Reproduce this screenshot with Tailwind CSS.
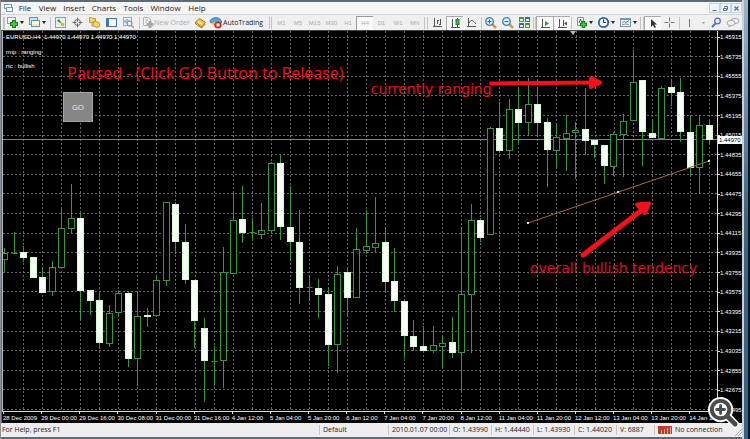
<!DOCTYPE html>
<html lang="en">
<head>
  <meta charset="UTF-8" />
  <meta name="viewport" content="width=device-width, initial-scale=1.0" />
  <title>EURUSD,H4</title>
  <script src="https://cdn.jsdelivr.net/npm/@tailwindcss/browser@4"></script>
</head>
<body class="h-screen overflow-hidden flex bg-[#5d6b75] font-['Open_Sans',sans-serif] text-[8px] leading-[10px] text-[#222]">
  <div class="flex-1 min-w-0 flex flex-col border-l border-[#8b9096] pt-[2px] pb-[2px]">

    <!-- Menu bar -->
    <div class="h-[12px] shrink-0 flex items-center bg-[#f5f5f6] pl-[2px]">
      <svg class="w-[11px] h-[11px] mr-[1px]" viewBox="0 0 11 11" fill="#fff" stroke="#6f9cc8"><rect x="1.5" y="1.5" width="7" height="4" /><rect x="3.5" y="4.5" width="6" height="4" /></svg>
      <nav class="flex flex-1">
        <button class="w-[20px]">File</button>
        <button class="w-[25px]">View</button>
        <button class="w-[28px]">Insert</button>
        <button class="w-[32px]">Charts</button>
        <button class="w-[27px]">Tools</button>
        <button class="w-[37px]">Window</button>
        <button class="w-[26px]">Help</button>
      </nav>
      <div class="flex text-[#5f7183]">
        <button aria-label="Minimize" class="w-[11px] h-[10px] border border-[#c3d3e6] bg-[#eef4fb] flex items-center justify-center"><svg class="w-[7px] h-[7px]" viewBox="0 0 7 7" stroke="currentColor"><path d="M1.5 5.5h4" /></svg></button>
        <button aria-label="Restore" class="w-[11px] h-[10px] border border-[#c3d3e6] bg-[#eef4fb] flex items-center justify-center"><svg class="w-[7px] h-[7px]" viewBox="0 0 7 7" fill="none" stroke="currentColor"><path d="M2.5 2.5v-1h3v3h-1M1.500 3.500h3v2h-3z" /></svg></button>
        <button aria-label="Close" class="w-[11px] h-[10px] border border-[#c3d3e6] bg-[#eef4fb] flex items-center justify-center"><svg class="w-[7px] h-[7px]" viewBox="0 0 7 7" stroke="currentColor" stroke-width="1.3"><path d="M1.500 1.500l4 4M5.500 1.500l-4 4" /></svg></button>
      </div>
    </div>

    <!-- Toolbar -->
    <div class="h-[16px] shrink-0 flex items-center overflow-hidden bg-[#f1f0f1] border-t border-[#d4d4d6] pl-[1px]">
      <i class="w-[4px] flex justify-center shrink-0"><b class="w-[2px] h-[12px] border-x border-[#c4c4c4]"></b></i>
      <button aria-label="New chart" class="w-[20px] shrink-0 flex items-center">
        <svg class="w-[13px] h-[13px]" viewBox="0 0 13 13"><rect x="1.500" y="1.500" width="8" height="6" fill="#fff" stroke="#8fa0a8" /><path d="M8 4v8M4 8h8" stroke="#12801c" stroke-width="4" /><path d="M8 5v6M5 8h6" stroke="#3ccc48" stroke-width="2" /></svg>
        <svg class="w-[5px] h-[3px]" viewBox="0 0 5 3"><path d="M1 0h4L3 3z" fill="#222" /></svg>
      </button>
      <button aria-label="Profiles" class="w-[22px] shrink-0 flex items-center pl-[2px]">
        <svg class="w-[13px] h-[13px]" viewBox="0 0 13 13" stroke="#5c93c6"><rect x="1.500" y="1.500" width="8" height="7" fill="#cfe3f5" /><rect x="3.500" y="4.500" width="8" height="6" fill="#fff" /><path d="M4 9h7" stroke="#f0e8c8" stroke-width="2" /></svg>
        <svg class="w-[5px] h-[3px]" viewBox="0 0 5 3"><path d="M1 0h4L3 3z" fill="#222" /></svg>
      </button>
      <i class="w-[4px] flex justify-center shrink-0"><b class="w-px h-[12px] bg-[#c4c4c4]"></b></i>
      <button aria-label="Market watch" class="w-[17px] shrink-0 flex justify-center">
        <svg class="w-[13px] h-[13px]" viewBox="0 0 13 13"><rect x="1.500" y="1.500" width="10" height="10" fill="#e8f4ea" stroke="#7fa2c4" /><path d="M3 5l2-2 2 3z" fill="#2f9a3a" /><path d="M4 5l6 4" stroke="#3b8850" /><circle cx="8.500" cy="8.500" r="1.800" fill="#e0b53a" /></svg>
      </button>
      <button aria-label="Data window" class="w-[17px] shrink-0 flex justify-center">
        <svg class="w-[13px] h-[13px]" viewBox="0 0 13 13" fill="none" stroke="#666"><circle cx="6.500" cy="6.500" r="3" /><path d="M6.500 1.500v4M6.500 7.500v4M1.500 6.500h4M7.500 6.500h4" /></svg>
      </button>
      <button aria-label="Navigator" class="w-[17px] shrink-0 flex justify-center">
        <svg class="w-[13px] h-[13px]" viewBox="0 0 13 13" fill="#f6d868" stroke="#c79a2a"><path d="M1.500 1.500h2l1 1h3v4h-6z" /><path d="M4 7v3h2" fill="none" stroke="#999" /><path d="M6 5l5 1.500 1 3.500-3 1.500-4-2z" /></svg>
      </button>
      <button aria-label="Terminal" class="w-[17px] shrink-0 flex justify-center">
        <svg class="w-[13px] h-[13px]" viewBox="0 0 13 13"><rect x="1.500" y="2.500" width="10" height="8" fill="#fff" stroke="#3f78b8" /><path d="M3 3v7" stroke="#3f78b8" stroke-width="2" /><path d="M5 4h6" stroke="#c3d8ee" /></svg>
      </button>
      <button aria-label="Strategy tester" class="w-[17px] shrink-0 flex justify-center">
        <svg class="w-[13px] h-[13px]" viewBox="0 0 13 13" fill="none"><rect x="1.500" y="1.500" width="8" height="8" fill="#eef2f6" stroke="#9aacbc" /><path d="M3 7V4M5 8V3M7 6V4" stroke="#6f90ac" /><circle cx="7.500" cy="7.500" r="2.500" stroke="#6f8fb0" /><path d="M9.500 9.500l2.500 2.500" stroke="#c79b3c" stroke-width="1.500" /></svg>
      </button>
      <i class="w-[4px] flex justify-center shrink-0"><b class="w-px h-[12px] bg-[#c4c4c4]"></b></i>
      <button class="w-[51px] shrink-0 flex items-center text-[#a9a9a9] whitespace-nowrap">
        <svg class="w-[13px] h-[13px] shrink-0" viewBox="0 0 13 13"><path d="M2.500 1.500h5l2 2v6h-7z" fill="#f4f4f4" stroke="#b4b4b4" /><path d="M4 4h3M4 6h2" stroke="#bbb" /><path d="M9 5v7M5.500 8.500h7" stroke="#a8a8a8" stroke-width="3" /></svg>
        <span class="text-[7px]">New Order</span>
      </button>
      <button aria-label="MetaEditor" class="w-[17px] shrink-0 flex justify-center">
        <svg class="w-[13px] h-[13px]" viewBox="0 0 13 13"><path d="M1.500 6l4-3.500 6 4-4 4.500z" fill="#f2be3e" stroke="#b17a18" /><path d="M1.500 6v2l6 4v-1.500M7.500 12l4-4" fill="none" stroke="#b17a18" /><path d="M4 5.500l4 2.500" stroke="#fff0b8" stroke-width="1.500" /></svg>
      </button>
      <button class="w-[58px] shrink-0 flex items-center whitespace-nowrap">
        <svg class="w-[14px] h-[13px] shrink-0" viewBox="0 0 14 13"><path d="M1 6c0-5 10-6 11-1l1 1-5 3z" fill="#5ca4da" stroke="#3b78ac" /><path d="M2 7l4-1 5 2-4 4z" fill="#edc04a" /><circle cx="9" cy="9" r="3.600" fill="#d8281e" /><rect x="7.500" y="7.500" width="3" height="3" fill="#fff" /></svg>
        <span class="text-[7px]">AutoTrading</span>
      </button>
      <i class="w-[6px] flex justify-center shrink-0"><b class="w-[3px] h-[12px] border-x border-[#c4c4c4]"></b></i>
      <div class="w-[150px] shrink-0 grid grid-cols-9 items-center text-[6px] text-[#aaa] font-['Liberation_Sans',sans-serif]">
        <button>M1</button><button>M5</button><button>M15</button><button>M30</button><button>H1</button>
        <button class="h-[14px] border-l border-t border-[#999] bg-[#fafafa]">H4</button>
        <button>D1</button><button>W1</button><button>MN</button>
      </div>
      <i class="w-[6px] flex justify-center shrink-0"><b class="w-[4px] h-[12px] border-x border-[#c4c4c4]"></b></i>
      <button aria-label="Bar chart" class="w-[17px] shrink-0 flex justify-center">
        <svg class="w-[13px] h-[13px]" viewBox="0 0 13 13" fill="none" stroke="#555"><path d="M3.500 2v8.500M2 10.500h9M6.500 4v4M6 4.500h2M9.500 3v6M8 8.500h2" /></svg>
      </button>
      <button aria-label="Candlesticks" class="w-[17px] h-[14px] shrink-0 flex justify-center border-l border-t border-[#aaa] bg-[#fafafa]">
        <svg class="w-[13px] h-[13px]" viewBox="0 0 13 13" fill="none"><path d="M3.500 2v8.500M2 10.500h9" stroke="#555" /><path d="M8.500 1v9" stroke="#14851f" /><rect x="7" y="2.500" width="3" height="5" fill="#35c043" stroke="#14851f" /></svg>
      </button>
      <button aria-label="Line chart" class="w-[17px] shrink-0 flex justify-center">
        <svg class="w-[13px] h-[13px]" viewBox="0 0 13 13" fill="none" stroke="#555"><path d="M3.500 2v8.500M2 10.500h9M4 7c2-4 4-3 7 1" /></svg>
      </button>
      <i class="w-[2px] flex justify-center shrink-0"><b class="w-px h-[12px] bg-[#c4c4c4]"></b></i>
      <button aria-label="Zoom in" class="w-[17px] shrink-0 flex justify-center">
        <svg class="w-[13px] h-[13px]" viewBox="0 0 13 13"><path d="M8 8l4 4" stroke="#cf9f3a" stroke-width="2.500" /><circle cx="5.500" cy="5.500" r="3.800" fill="#dcedfb" stroke="#3d7ec2" stroke-width="1.300" /><path d="M3.500 5.500h4M5.500 3.500v4" stroke="#2e68a8" /></svg>
      </button>
      <button aria-label="Zoom out" class="w-[17px] shrink-0 flex justify-center">
        <svg class="w-[13px] h-[13px]" viewBox="0 0 13 13"><path d="M8 8l4 4" stroke="#cf9f3a" stroke-width="2.500" /><circle cx="5.500" cy="5.500" r="3.800" fill="#dcedfb" stroke="#3d7ec2" stroke-width="1.300" /><path d="M3.500 5.500h4" stroke="#2e68a8" /></svg>
      </button>
      <button aria-label="Tile windows" class="w-[17px] shrink-0 flex justify-center">
        <svg class="w-[13px] h-[13px]" viewBox="0 0 13 13"><path d="M1 1h5v5H1zM7 7h5v5H7z" fill="#3f9a48" /><path d="M7 1h5v5H7zM1 7h5v5H1z" fill="#2f6cb4" /><path d="M2 4h3M8 4h3M2 10h3M8 10h3" stroke="#e9f3c8" stroke-width="2" /></svg>
      </button>
      <i class="w-[3px] flex justify-center shrink-0"><b class="w-[3px] h-[12px] border-x border-[#c4c4c4]"></b></i>
      <button aria-label="Auto scroll" class="w-[17px] h-[14px] shrink-0 flex justify-center border-l border-t border-[#aaa] bg-[#fafafa]">
        <svg class="w-[13px] h-[13px]" viewBox="0 0 13 13" fill="none"><path d="M3.500 2v8.500M2 10.500h9" stroke="#555" /><path d="M6 4l4 2.500L6 9z" fill="#2c9c38" /></svg>
      </button>
      <button aria-label="Chart shift" class="w-[17px] h-[14px] shrink-0 flex justify-center border-l border-t border-[#aaa] bg-[#fafafa]">
        <svg class="w-[13px] h-[13px]" viewBox="0 0 13 13" fill="none"><path d="M3.500 2v8.500M2 10.500h9M7.500 3v6" stroke="#555" /><path d="M8 6.500l3-2v4z" fill="#555" /></svg>
      </button>
      <i class="w-[3px] flex justify-center shrink-0"><b class="w-px h-[12px] bg-[#c4c4c4]"></b></i>
      <button aria-label="Indicators" class="w-[22px] shrink-0 flex items-center pl-[2px]">
        <svg class="w-[13px] h-[13px]" viewBox="0 0 13 13"><path d="M2.500 1.500h6v8h-6z" fill="#fff" stroke="#7c9c80" /><path d="M4 7l1.500-4L7 7" fill="none" stroke="#555" /><path d="M8.500 5v7M5 8.500h7" stroke="#12801c" stroke-width="3.500" /><path d="M8.500 6v5M6 8.500h5" stroke="#3ccc48" stroke-width="1.500" /></svg>
        <svg class="w-[5px] h-[3px]" viewBox="0 0 5 3"><path d="M1 0h4L3 3z" fill="#222" /></svg>
      </button>
      <button aria-label="Periods" class="w-[22px] shrink-0 flex items-center pl-[2px]">
        <svg class="w-[13px] h-[13px]" viewBox="0 0 13 13"><circle cx="6.500" cy="6.500" r="4.700" fill="#f2f8fe" stroke="#2863ae" stroke-width="1.800" /><path d="M6.500 3.500v3h2.500" fill="none" stroke="#333" /></svg>
        <svg class="w-[5px] h-[3px]" viewBox="0 0 5 3"><path d="M1 0h4L3 3z" fill="#222" /></svg>
      </button>
      <button aria-label="Templates" class="w-[22px] shrink-0 flex items-center pl-[2px]">
        <svg class="w-[13px] h-[13px]" viewBox="0 0 13 13" fill="none"><rect x="1.500" y="2.500" width="10" height="8" fill="#eef4fa" stroke="#7794b4" /><path d="M2 3.500h9" stroke="#7794b4" /><path d="M3 7l2-1.500 2 1 3-2" stroke="#6a8aa8" /><path d="M3 9l3-1 4 .5" stroke="#9a9a8a" /></svg>
        <svg class="w-[5px] h-[3px]" viewBox="0 0 5 3"><path d="M1 0h4L3 3z" fill="#222" /></svg>
      </button>
      <i class="w-[5px] flex justify-center shrink-0"><b class="w-[4px] h-[12px] border-x border-[#c4c4c4]"></b></i>
      <button aria-label="Cursor" class="w-[17px] h-[14px] shrink-0 flex justify-center border-l border-t border-[#aaa] bg-[#fafafa]">
        <svg class="w-[13px] h-[13px]" viewBox="0 0 13 13"><path d="M4 2v8l2-2 1.500 3 1.500-.8L7.500 7.500H10z" fill="#333" /></svg>
      </button>
      <button aria-label="Crosshair" class="w-[17px] shrink-0 flex justify-center">
        <svg class="w-[13px] h-[13px]" viewBox="0 0 13 13" stroke="#777"><path d="M6.500 1.500v4M6.500 7.500v4M1.500 6.500h4M7.500 6.500h4" /></svg>
      </button>
      <i class="w-[3px] flex justify-center shrink-0"><b class="w-px h-[12px] bg-[#c4c4c4]"></b></i>
      <button aria-label="Vertical line" class="w-[17px] shrink-0 flex justify-center">
        <svg class="w-[13px] h-[13px]" viewBox="0 0 13 13" stroke="#777"><path d="M6.500 3v8" /></svg>
      </button>
      <button aria-label="More" class="w-[10px] shrink-0 flex justify-center">
        <svg class="w-[3px] h-[3px]" viewBox="0 0 3 3"><path d="M0 1h3L1.500 3z" fill="#999" /></svg>
      </button>
      <button aria-label="Search" class="w-[16px] shrink-0 flex justify-center ml-auto">
        <svg class="w-[13px] h-[13px]" viewBox="0 0 13 13" fill="none" stroke="#4b72b8"><path d="M5.500 7.500L2 11" stroke-width="2" /><circle cx="7.500" cy="5" r="2.800" stroke-width="1.300" /></svg>
      </button>
      <button aria-label="Chat" class="w-[18px] shrink-0 flex justify-center">
        <svg class="w-[14px] h-[13px]" viewBox="0 0 14 13" fill="#f2f2f2" stroke="#a8a8a8"><ellipse cx="9" cy="5" rx="4" ry="2.600" /><ellipse cx="5" cy="7" rx="4" ry="2.600" /><path d="M3 9v2l2-1.500" /></svg>
      </button>
    </div>

    <!-- Chart window -->
    <main class="flex-1 min-h-0 relative flex bg-black border-t border-[#3f464c] ml-[1px] text-white text-[6px] leading-[8px] font-['Liberation_Sans',sans-serif]">
      <div class="flex-1 min-w-0 flex flex-col">
        <div class="flex-1 min-h-0 relative border-l border-[#b5bac0]">
          <svg id="chart" class="absolute inset-0 w-full h-full" viewBox="3 31 714 380" preserveAspectRatio="none" fill="none"></svg>
          <p class="absolute left-[3px] top-[2px] whitespace-pre">EURUSD,H4  1.44970 1.44970 1.44970 1.44970</p>
          <p class="absolute left-[3px] top-[17px]">rmp : ranging</p>
          <p class="absolute left-[3px] top-[31px]">rtc : bullish</p>
          <h1 class="absolute left-[9%] top-[32px] text-[16px] leading-[20px] text-[#f0101c] font-['Open_Sans',sans-serif] whitespace-nowrap">Paused - (Click GO Button to Release)</h1>
          <button class="absolute left-[8.4%] top-[61px] w-[30px] h-[30px] bg-[#868686] border border-[#a5a5a5] text-[8px] text-[#eee] font-['Open_Sans',sans-serif]">GO</button>
          <p class="absolute left-[51.5%] top-[13%] text-[14px] leading-[18px] text-[#e8101c] font-['DejaVu_Sans',sans-serif] whitespace-nowrap">currently ranging</p>
          <p class="absolute left-[73.8%] top-[60%] text-[14px] leading-[18px] text-[#d8102a] font-['DejaVu_Sans',sans-serif] whitespace-nowrap">overall bullish tendency</p>
        </div>
        <div id="times" class="h-[12px] shrink-0 flex border-t border-[#d8d8d8] pl-[1px]"></div>
      </div>
      <div class="w-[25px] shrink-0 relative mb-[9px]">
        <div id="prices" class="h-full flex flex-col justify-between border-l border-[#d8d8d8] pt-[2px]"></div>
        <span class="absolute left-[1px] right-0 top-[27.5%] h-[8px] bg-white text-black pl-[1px]">1.44970</span>
      </div>
      <button aria-label="Enlarge" class="absolute right-[3px] -bottom-[5px] w-[32px] h-[32px]">
        <svg viewBox="0 0 33 33" fill="none" stroke-linecap="round"><path d="M22 22l7 7" stroke="#fff" stroke-width="8" /><circle cx="14" cy="14" r="10" fill="#fff" stroke="#fff" stroke-width="6" /><path d="M21 21l8 8" stroke="#4b4b4b" stroke-width="5" /><circle cx="14" cy="14" r="9" fill="#fff" stroke="#4b4b4b" stroke-width="4" /><path d="M14 10v8M10 14h8" stroke="#4b4b4b" stroke-width="3" /></svg>
      </button>
    </main>

    <!-- Status bar -->
    <footer class="h-[14px] shrink-0 flex items-center bg-[#efeeef] text-[7px] pl-[1px] whitespace-nowrap">
      <span class="flex-1">For Help, press F1</span>
      <span class="w-[69px] border-l border-[#c6c6c6] pl-[3px]">Default</span>
      <span class="w-[61px] border-l border-[#c6c6c6] pl-[3px]">2010.01.07 00:00</span>
      <span class="w-[42px] border-l border-[#c6c6c6] pl-[3px]">O: 1.43990</span>
      <span class="w-[42px] border-l border-[#c6c6c6] pl-[3px]">H: 1.44440</span>
      <span class="w-[41px] border-l border-[#c6c6c6] pl-[3px]">L: 1.43930</span>
      <span class="w-[42px] border-l border-[#c6c6c6] pl-[3px]">C: 1.44020</span>
      <span class="w-[38px] border-l border-[#c6c6c6] pl-[3px]">V: 6887</span>
      <span class="w-[81px] border-l border-[#c6c6c6] pl-[3px] flex items-center gap-[3px]">
        <svg class="w-[14px] h-[8px]" viewBox="0 0 14 8"><path d="M0 0h14v8H0z" fill="#b5402f" /><path d="M3.500 4v4M6.500 3v5M9.500 2v6M12.500 1v7" stroke="#dca090" /></svg>
        No connection
      </span>
      <svg class="w-[7px] h-[14px]" viewBox="0 0 7 14" stroke="#a8a8a8"><path d="M0 13l7-7M3 13l4-4" /></svg>
    </footer>
  </div>

  <!-- Window frame -->
  <div class="w-[8px] shrink-0 flex">
    <div class="w-[2px] bg-[#c9d2da]"></div>
    <div class="w-[4px] bg-gradient-to-b from-[#9db4c4] via-[#41647f] to-[#3a6180]"></div>
    <div class="w-[2px] bg-[#10161c]"></div>
  </div>

  <script>
    // [high, body top, body bottom, low, falling]
    const candles = [
      [248,253,259,273,0],[232,253,253,253,0],[246,252,257,262,1],[257,257,277,277,1],[269,277,292,293,1],
      [261,267,291,296,0],[207,228,267,268,0],[184,218,228,233,0],[213,218,290,321,1],[290,290,300,315,1],
      [293,300,342,348,1],[305,313,343,347,0],[290,293,312,317,0],[292,293,358,367,1],[291,316,358,386,0],
      [308,315,316,327,1],[276,280,315,315,0],[202,202,280,286,0],[202,204,241,254,1],[224,242,279,284,1],
      [280,280,320,348,1],[318,328,360,402,1],[346,361,361,386,0],[247,272,360,388,0],[192,220,273,274,0],
      [186,219,232,243,1],[218,232,232,241,0],[203,230,234,239,0],[162,163,230,233,0],[154,163,226,240,1],
      [186,227,241,261,1],[210,242,287,304,1],[275,287,287,300,0],[279,288,294,318,1],[287,294,344,366,1],
      [266,274,344,373,0],[268,272,297,315,1],[228,249,297,298,0],[210,246,250,254,0],[197,243,247,253,0],
      [229,242,281,292,1],[248,281,300,312,1],[300,301,335,358,1],[320,336,346,351,1],[326,346,350,351,1],
      [326,345,350,353,0],[336,343,346,369,0],[317,342,352,358,1],[229,294,352,393,0],[204,220,294,353,0],
      [218,220,237,242,1],[127,128,234,234,0],[102,128,150,150,1],[99,109,150,159,0],[88,109,122,143,1],
      [78,104,122,135,0],[89,104,122,135,1],[118,122,149,187,1],[125,137,150,169,0],[115,133,138,171,0],
      [122,130,132,179,0],[88,129,140,155,1],[139,140,144,158,1],[145,145,165,184,1],[132,134,166,176,0],
      [114,121,134,177,0],[50,82,120,121,0],[80,80,131,166,1],[121,133,137,138,1],[86,88,138,139,0],
      [79,87,92,106,1],[78,92,131,142,1],[117,132,167,175,1],[115,125,167,193,0],[121,125,139,143,1]
    ];
    const times = ['28 Dec 2009', '29 Dec 00:00', '29 Dec 16:00', '30 Dec 08:00', '31 Dec 00:00', '31 Dec 16:00',
      '4 Jan 12:00', '5 Jan 04:00', '5 Jan 20:00', '6 Jan 12:00', '7 Jan 04:00', '7 Jan 20:00', '8 Jan 12:00',
      '11 Jan 04:00', '11 Jan 20:00', '12 Jan 12:00', '13 Jan 04:00', '13 Jan 20:00', '14 Jan 12:00'];

    let svg = '<g stroke="#666a70" stroke-dasharray="2 2" shape-rendering="crispEdges">';
    for (let i = 1; i < 38; i++) {
      const x = Math.round(4 + i * 19.05) + 0.5;
      svg += `<path d="M${x} 31V411" />`;
    }
    for (let i = 0; i < 20; i++) {
      const y = Math.floor(37 + i * 19.6) + 0.5;
      svg += `<path d="M3 ${y}H717" />`;
    }
    svg += '</g><path d="M3 139.500H717" stroke="#7d838a" />';

    candles.forEach(([high, top, bottom, low, falling], i) => {
      const x = Math.round(4 + i * 9.523) + 0.5;
      svg += `<path d="M${x} ${high}V${top}M${x} ${bottom}V${low}" stroke="#35963e" />`;
      if (top === bottom) {
        svg += `<path d="M${x - 3} ${top + 0.5}h6" stroke="#35963e" />`;
      } else {
        svg += `<rect x="${x - 3}" y="${top + 0.5}" width="6" height="${bottom - top}" fill="${falling ? '#f8fff6' : '#000'}" stroke="${falling ? '#d4fad0' : '#35963e'}" />`;
      }
    });

    // Trend line, arrows and shift marker
    svg += `
      <path d="M528 223L709 161" stroke="#a8683c" />
      <path d="M527 222h2v2h-2zM617 191h2v2h-2zM708 160h2v2h-2z" fill="#ffd9b0" />
      <g stroke="#f5101a" stroke-linecap="round" stroke-linejoin="round">
        <path d="M491 83.500L599 82.500" stroke-width="4" /><path d="M591 78L600 82.500L591 87z" fill="#f5101a" stroke-width="4" />
        <path d="M583 255L647 206" stroke-width="5" /><path d="M637 204.500L649 203.500L645 213z" fill="#f5101a" stroke-width="4" />
      </g>
      <path d="M570 31h6l-3 4z" fill="#b8b8b8" />`;
    document.getElementById('chart').innerHTML = svg;

    document.getElementById('times').innerHTML = times.map(t =>
      `<span class="w-[5.34%] shrink-0 whitespace-nowrap"><i class="block w-px h-[2px] bg-[#d8d8d8]"></i>${t}</span>`).join('');

    const prices = document.getElementById('prices');
    for (let i = 0; i < 20; i++) {
      prices.innerHTML += `<span class="flex items-center h-[8px]"><i class="w-[2px] h-px bg-[#d8d8d8]"></i>${(1.45915 - i * 0.0018).toFixed(5)}</span>`;
    }
  </script>
</body>
</html>
